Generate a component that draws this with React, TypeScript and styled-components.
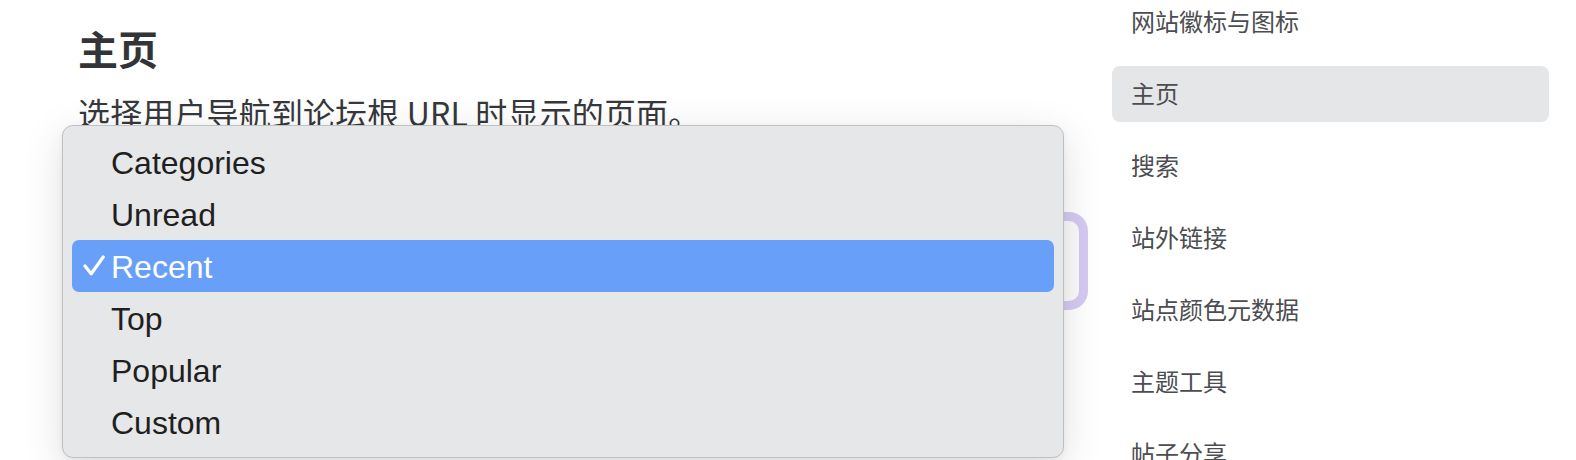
import React from "react";
import styled, { createGlobalStyle } from "styled-components";

const GlobalStyle = createGlobalStyle`
  html, body {
    margin: 0;
    padding: 0;
    background: #ffffff;
  }
  body {
    font-family: "Noto Sans CJK SC", "Noto Sans", sans-serif;
    overflow: hidden;
  }
`;

const Page = styled.div`
  display: flex;
  height: 460px;
  overflow: hidden;
`;

const Main = styled.main`
  position: relative;
  flex: 0 0 1001px;
  margin-left: 78px;
`;

const Title = styled.h2`
  margin: 0;
  padding-top: 24px;
  font-size: 40px;
  line-height: 48px;
  font-weight: 700;
  color: #323437;
`;

const Description = styled.p`
  margin: 20px 0 0;
  font-size: 32px;
  line-height: 40px;
  letter-spacing: 0.15px;
  color: #36383c;
`;

const SelectBox = styled.div`
  box-sizing: border-box;
  margin-top: 89px;
  height: 80px;
  border-radius: 10px;
  background: #fbfbfb;
  box-shadow: 0 0 0 9px #d6caf2;
`;

const Menu = styled.ul`
  position: absolute;
  left: -16px;
  top: 125px;
  box-sizing: border-box;
  width: 1002px;
  margin: 0;
  padding: 10px 9px 9px;
  list-style: none;
  background: #e6e7e9;
  border: 1px solid #bfc0c2;
  border-radius: 11px;
  box-shadow: 0 10px 40px rgba(0, 0, 0, 0.13), 0 2px 6px rgba(0, 0, 0, 0.05);
`;

const Option = styled.li<{ $selected?: boolean }>`
  display: flex;
  align-items: center;
  box-sizing: border-box;
  height: 52px;
  padding: 3px 0 0 11px;
  border-radius: 7px;
  font-family: "Liberation Sans", Arial, sans-serif;
  font-size: 32px;
  color: ${(p) => (p.$selected ? "#ffffff" : "#1f1f21")};
  background: ${(p) => (p.$selected ? "#689ff8" : "transparent")};
`;

const CheckSlot = styled.span`
  display: flex;
  align-items: center;
  width: 28px;
  height: 100%;
`;

const Sidebar = styled.nav`
  display: flex;
  flex-direction: column;
  gap: 16px;
  flex: 0 0 437px;
  margin-left: 33px;
  margin-top: -6px;
`;

const NavItem = styled.div<{ $active?: boolean }>`
  display: flex;
  align-items: center;
  box-sizing: border-box;
  height: 56px;
  flex-shrink: 0;
  padding: 0 0 3px 19px;
  border-radius: 8px;
  font-size: 24px;
  color: #4b4d51;
  background: ${(p) => (p.$active ? "#e5e6e8" : "transparent")};
`;

const options = ["Categories", "Unread", "Recent", "Top", "Popular", "Custom"];
const navItems = ["网站徽标与图标", "主页", "搜索", "站外链接", "站点颜色元数据", "主题工具", "帖子分享"];

function Check() {
  return (
    <svg width="22" height="21" viewBox="0 0 22 21" style={{ marginTop: -4 }}>
      <polyline
        points="2,11 8.2,18.8 20.2,2"
        fill="none"
        stroke="#ffffff"
        strokeWidth="3.2"
        strokeLinecap="round"
        strokeLinejoin="round"
      />
    </svg>
  );
}

export default function App() {
  return (
    <Page>
      <GlobalStyle />
      <Main>
        <Title>主页</Title>
        <Description>选择用户导航到论坛根 URL 时显示的页面。</Description>
        <SelectBox />
        <Menu>
          {options.map((o) => (
            <Option key={o} $selected={o === "Recent"}>
              <CheckSlot>{o === "Recent" && <Check />}</CheckSlot>
              {o}
            </Option>
          ))}
        </Menu>
      </Main>
      <Sidebar>
        {navItems.map((n) => (
          <NavItem key={n} $active={n === "主页"}>
            {n}
          </NavItem>
        ))}
      </Sidebar>
    </Page>
  );
}
